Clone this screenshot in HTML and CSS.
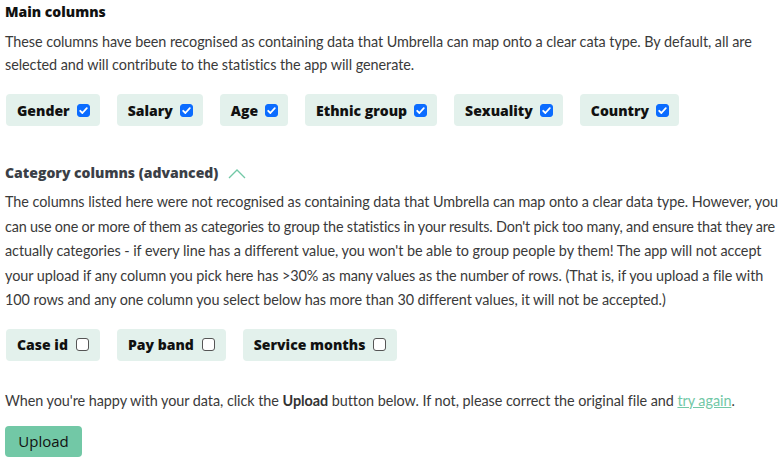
FILE: index.html
```html
<!DOCTYPE html>
<html>
<head>
<meta charset="utf-8">
<link rel="stylesheet" href="styles.css">
</head>
<body>
<main class="page">
  <h2 class="title">Main columns</h2>
  <p class="text">These columns have been recognised as containing data that Umbrella can map onto a clear cata type. By default, all are<br>selected and will contribute to the statistics the app will generate.</p>
  <div class="chips">
    <label class="chip">Gender <span class="box checked"><svg viewBox="0 0 13 13"><path d="M3.2 6.8l2.2 2.2 4.4-4.8" fill="none" stroke="#fff" stroke-width="1.8" stroke-linecap="round" stroke-linejoin="round"/></svg></span></label>
    <label class="chip">Salary <span class="box checked"><svg viewBox="0 0 13 13"><path d="M3.2 6.8l2.2 2.2 4.4-4.8" fill="none" stroke="#fff" stroke-width="1.8" stroke-linecap="round" stroke-linejoin="round"/></svg></span></label>
    <label class="chip">Age <span class="box checked"><svg viewBox="0 0 13 13"><path d="M3.2 6.8l2.2 2.2 4.4-4.8" fill="none" stroke="#fff" stroke-width="1.8" stroke-linecap="round" stroke-linejoin="round"/></svg></span></label>
    <label class="chip">Ethnic group <span class="box checked"><svg viewBox="0 0 13 13"><path d="M3.2 6.8l2.2 2.2 4.4-4.8" fill="none" stroke="#fff" stroke-width="1.8" stroke-linecap="round" stroke-linejoin="round"/></svg></span></label>
    <label class="chip">Sexuality <span class="box checked"><svg viewBox="0 0 13 13"><path d="M3.2 6.8l2.2 2.2 4.4-4.8" fill="none" stroke="#fff" stroke-width="1.8" stroke-linecap="round" stroke-linejoin="round"/></svg></span></label>
    <label class="chip">Country <span class="box checked"><svg viewBox="0 0 13 13"><path d="M3.2 6.8l2.2 2.2 4.4-4.8" fill="none" stroke="#fff" stroke-width="1.8" stroke-linecap="round" stroke-linejoin="round"/></svg></span></label>
  </div>
  <h3 class="subtitle">Category columns (advanced) <svg class="chev" viewBox="0 0 18 10" width="18" height="10"><path d="M1 9l8-8 8 8" fill="none" stroke="#72c8a6" stroke-width="1.3"/></svg></h3>
  <p class="text text-long">The columns listed here were not recognised as containing data that Umbrella can map onto a clear data type. However, you<br><span class="tight">can use one or more of them as categories to group the statistics in your results. Don't pick too many, and ensure that they are</span><br>actually categories - if every line has a different value, you won't be able to group people by them! The app will not accept<br>your upload if any column you pick here has &gt;30% as many values as the number of rows. (That is, if you upload a file with<br>100 rows and any one column you select below has more than 30 different values, it will not be accepted.)</p>
  <div class="chips chips-2">
    <label class="chip chip-wide">Case id <span class="box"></span></label>
    <label class="chip chip-wide">Pay band <span class="box"></span></label>
    <label class="chip chip-wide">Service months <span class="box"></span></label>
  </div>
  <p class="text final">When you're happy with your data, click the <b>Upload</b> button below. If not, please correct the original file and <a class="link" href="#">try again</a>.</p>
  <button class="btn">Upload</button>
</main>
</body>
</html>
```
FILE: styles.css
```css
html, body { margin: 0; padding: 0; background: #fff; }
.page { padding: 0 5px; font-family: Lato, "Open Sans", sans-serif; }
.title { margin: 0; padding-top: 3px; font-family: "Open Sans", sans-serif; font-weight: 800; font-size: 14px; line-height: 18px; color: #111; }
.text { margin: 0; font-size: 14.4px; letter-spacing: -0.05px; line-height: 23px; color: #3a3a3a; white-space: nowrap; }
.tight { letter-spacing: -0.18px; }
.title + .text { margin-top: 9px; }
.chips { display: flex; gap: 17px; margin-top: 18px; margin-left: 1px; }
.chip { display: flex; align-items: center; gap: 7px; height: 32px; padding: 0 10px 0 11px; background: #e3f1ec; border-radius: 4px; font-family: "Open Sans", sans-serif; font-weight: 800; font-size: 14px; color: #111; }
.chip-wide { padding-right: 11px; gap: 8px; }
.box { width: 13px; height: 13px; box-sizing: border-box; border-radius: 3px; border: 1px solid #555; background: #fff; display: inline-flex; }
.box.checked { background: #0b6cff; border-color: #0b6cff; }
.box svg { width: 13px; height: 13px; margin: -1px; }
.subtitle { margin: 38px 0 0; font-family: "Open Sans", sans-serif; font-weight: 800; font-size: 14px; line-height: 18px; color: #3b3f47; display: flex; align-items: center; gap: 10px; }
.chev { margin-top: 2px; }
.text-long { margin-top: 8px; line-height: 24.5px; }
.chips-2 { margin-top: 16px; }
.final { margin-top: 28px; }
.final b { font-weight: 700; color: #333; }
.link { color: #72c8a6; }
.btn { margin-top: 14px; display: block; width: 77px; height: 31px; border: none; border-radius: 4px; background: #72c8a6; font-family: "Open Sans", sans-serif; font-weight: 500; font-size: 15px; color: #111; padding: 0; }
```
